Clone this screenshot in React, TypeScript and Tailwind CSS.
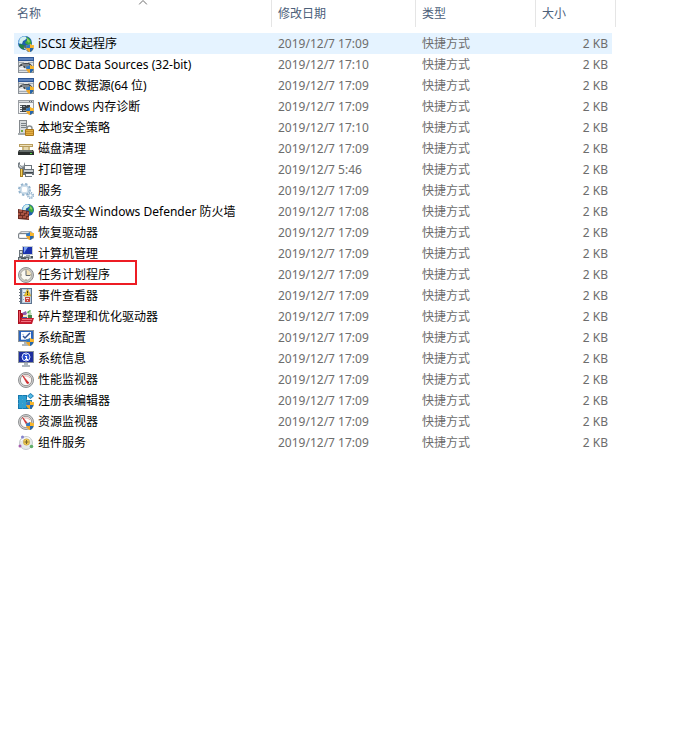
import type { ReactNode } from 'react';

// small UAC shield, anchored at its top left corner
const Shield = ({ x = 8, y = 8 }: { x?: number; y?: number }) => (
  <g transform={`translate(${x} ${y})`}>
    <path d="M4 0C5 1 6.500 1.200 8 1.200C8 5 7 7 4 8C1 7 0 5 0 1.200C1.500 1.200 3 1 4 0Z" fill="#f2c14b" />
    <path d="M4 0V4H0.300L0 1.200C1.500 1.200 3 1 4 0Z" fill="#2f77c4" />
    <path d="M4 4H7.600C7 6.200 6 7.300 4 8Z" fill="#2565ad" />
    <path d="M4 0C5 1 6.500 1.200 8 1.200L7.600 4H4Z" fill="#f7b52c" />
    <path d="M0.300 4H4V8C2 7.300 1 6.200 0.300 4Z" fill="#eda52a" />
  </g>
);

const Globe = ({ cx, cy, r }: { cx: number; cy: number; r: number }) => (
  <g transform={`translate(${cx} ${cy}) scale(${r / 7})`}>
    <circle r="7" fill="#1f5fae" />
    <path d="M-7 0A7 7 0 0 1 1 -6.900C-1 -4 -2 -2 -5 1Z" fill="#79b8e8" />
    <path d="M-5 -4C-3 -7 1 -6.500 2 -5L0 -3L-2 -2L-3 1L-6 0Z" fill="#d4f0ee" />
    <path d="M1 -6C4 -6 6 -3 6.500 0C6 3 4 4 3 2L0 0L1 -2L3 -3Z" fill="#3aa640" />
    <path d="M-5 1L-1 2L1 4L-1 6.500C-4 6 -5.500 4 -6 2Z" fill="#238345" />
    <path d="M2 -5L5 -2L4 0L2 -2Z" fill="#8bd25b" />
  </g>
);

const IscsiIcon = (
  <>
    <Globe cx={7} cy={7} r={7} />
    <path d="M5 11L8 9L12 10L14 15L10 16Z" fill="#566a70" />
    <path d="M6 12L9 14" stroke="#d3dcdd" strokeWidth="1" />
    <Shield />
  </>
);

const OdbcIcon = (
  <>
    <path fill="#2f5796" d="M0 0H16V4H0Z" />
    <path fill="#5c82bd" d="M1 1H15V3H1Z" />
    <path fill="#8b9197" d="M0 4H16V16H0Z" />
    <path fill="#dfe1e3" d="M1 4H15V15H1Z" />
    <path fill="#a3abb2" d="M1 5H6V6H1ZM10 5H15V6H10ZM1 13H9V14H1Z" />
    <path d="M1 10V9C2 7 4 6 7 6H11C13 7 14 8 15 10L12 9H10L9 11H6L5 9H3Z" fill="#454b50" />
    <path d="M4 8H11M7 10H8" stroke="#c0c5c9" />
    <path d="M2 11H6V12H2Z" fill="#f7f8f8" />
    <Shield />
  </>
);

const MemoryIcon = (
  <>
    <path fill="#9a9ea3" d="M0 1H16V15H0Z" />
    <path fill="#f5f6f7" d="M1 4H15V14H1Z" />
    <path fill="#d7dadd" d="M1 2H15V3H1Z" />
    <path fill="#5f666d" d="M11 2H12V3H11ZM13 2H14V3H13Z" />
    <path fill="#3b4146" d="M4 6H12V13H4Z" />
    <path d="M2 6.500H4M2 8.500H4M2 10.500H4M2 12.500H4" stroke="#5c6369" />
    <path d="M5 7.500H7M8 6.500H9M5 11.500H8M9 9.500H11" stroke="#8f979d" />
    <Shield />
  </>
);

const SecurityIcon = (
  <>
    <path fill="#84898d" d="M1 0H9V14H1Z" />
    <path fill="#d6dadc" d="M2 1H8V13H2Z" />
    <path fill="#7b8287" d="M3 3H8V4H3ZM3 5H8V6H3ZM3 7H8V8H3Z" />
    <path fill="#a4aaad" d="M0 13H8V15H0Z" />
    <rect x="3" y="10" width="2" height="2" fill="#6fa842" />
    <path d="M9 10V8.500C9 6.500 10 6 11.500 6S14 6.500 14 8.500V10" fill="none" stroke="#8b9194" strokeWidth="1.500" />
    <rect x="7" y="9" width="9" height="7" rx="1" fill="#a87519" />
    <rect x="8" y="10" width="7" height="5" fill="#e3b144" />
    <path d="M8 11.500H15M8 13.500H15" stroke="#c98f2d" />
  </>
);

const DiskCleanupIcon = (
  <>
    <path d="M1 3H15V6H1Z" fill="#b99d5d" />
    <path d="M2 4H14V5H2Z" fill="#ede0b8" />
    <path d="M4 6H12V9H4Z" fill="#cdb77e" />
    <path d="M6 6H10V9H6Z" fill="#e5d7ab" />
    <path d="M1 9H15L16 11V14H0V11Z" fill="#2c302f" />
    <path d="M2 9H14L15 11H1Z" fill="#666d6b" />
    <rect x="12" y="12" width="2" height="1" fill="#4edb44" />
  </>
);

const PrintIcon = (
  <>
    <path fill="#6a737a" d="M6 3H14V7H16V13H14V15H7V13H5V6H6Z" />
    <path fill="#f9fafb" d="M7 4H13V7H7ZM8 12H14V14H8Z" />
    <path fill="#c5ccd1" d="M6 8H15V10H6Z" />
    <path fill="#3d454b" d="M7 10H15V11H7Z" />
    <path d="M2 6H5V15H2Z" fill="#a57f22" />
    <path d="M3 7H4V14H3Z" fill="#f1cf5d" />
    <path d="M0 1L2 0V3L4 4L6 3V0L7 2V5L5 7H2L0 5Z" fill="#777f85" />
    <path d="M1 2V4L3 6L6 4V3L4 5L2 4Z" fill="#dfe4e7" />
  </>
);

const ServicesIcon = (
  <>
    <circle cx="6.500" cy="6.500" r="5.500" fill="none" stroke="#93b3cd" strokeWidth="2" strokeDasharray="2.300 2.020" />
    <circle cx="6.500" cy="6.500" r="4" fill="white" stroke="#a7c1d6" strokeWidth="2" />
    <circle cx="6.500" cy="6.500" r="3.800" fill="none" stroke="#d8e7f2" />
    <circle cx="12.500" cy="12.500" r="2.800" fill="none" stroke="#87a9c6" strokeWidth="1.500" strokeDasharray="1.300 0.900" />
    <circle cx="12.500" cy="12.500" r="1.700" fill="white" stroke="#a9c3d8" />
  </>
);

const FirewallIcon = (
  <>
    <Globe cx={10} cy={6} r={6} />
    <path fill="#6b2d24" d="M0 5L5 6L11 7V16L0 15Z" />
    <path fill="#a95343" d="M1 6H4V8H1ZM5 7H8V9H5ZM9 8H11V10H9ZM0 9H2V11H0ZM3 9H6V11H3ZM7 10H10V12H7ZM1 12H4V14H1ZM5 12H8V14H5ZM9 13H11V15H9Z" />
  </>
);

const RecoveryIcon = (
  <>
    <path d="M3 6H13L16 9V13H0V9Z" fill="#a8adb2" />
    <path d="M4 7H12L14 9H2Z" fill="#dfe2e5" />
    <rect x="0" y="8" width="16" height="6" rx="2" fill="#7f858b" />
    <rect x="1" y="9" width="14" height="4" rx="1" fill="#e9ebed" />
    <path d="M2 10H8V12H2Z" fill="white" />
    <Shield x={8} y={7} />
  </>
);

const ComputerIcon = (
  <>
    <path fill="#c6cdd2" d="M4 0H15V9H4Z" />
    <path fill="#1a31ae" d="M5 1H14V8H5Z" />
    <path fill="#7ba2f1" d="M6 1H10L6 7Z" />
    <path fill="#9ba4aa" d="M8 9H12V10H15V13H6V10H8Z" />
    <path fill="#6a737a" d="M1 4H5V11H1Z" />
    <path fill="#d5dadd" d="M2 5H4V7H2ZM2 8H4V10H2Z" />
    <path fill="#5d666d" d="M0 11H11V15H0Z" />
    <path fill="#b8c0c5" d="M1 12H10V14H1Z" />
    <path fill="#48545c" d="M3 12H8V13H3ZM13 10H15V12H13Z" />
  </>
);

const SchedulerIcon = (
  <>
    <circle cx="8" cy="8" r="7.500" fill="#c9c9c7" stroke="#8e8f8f" />
    <circle cx="8" cy="8" r="5.500" fill="#faf9f1" stroke="#aaa99f" />
    <path d="M8 8V3A5 5 0 0 1 13 8Z" fill="#f3e2b6" />
    <path d="M8 3V4M8 12V13M3 8H4M12 8H13" stroke="#918b78" />
    <path d="M8 4V8.500H12" fill="none" stroke="#626871" />
  </>
);

const EventIcon = (
  <>
    <path fill="#5d7490" d="M2 0H14V16H2Z" />
    <path fill="#b9cbdd" d="M4 1H13V15H4Z" />
    <path fill="#e5edf4" d="M5 2H12V14H5Z" />
    <path fill="#8aa4bf" d="M5 4H8V5H5ZM5 7H7V8H5ZM5 11H6V12H5Z" />
    <path d="M1 1.500H4M1 4.500H4M1 7.500H4M1 10.500H4M1 13.500H4" stroke="#69737e" />
    <path d="M9.500 1L13 8H6Z" fill="#efc52c" stroke="#b48e22" strokeWidth="0.500" />
    <path d="M9.500 3V5.500M9.500 6V7" stroke="#4a3c10" />
    <path d="M7 9H12V14H7Z" fill="#c9473f" />
    <path d="M8 10H11V11H8ZM9 12H10V13H9Z" fill="#f7d9d4" />
  </>
);

const DefragIcon = (
  <>
    <path d="M0 1H3V4H6V8H14V15H0Z" fill="#a30d1b" />
    <path d="M1 2H2V13H1Z" fill="#ee5c69" />
    <path d="M4 4L8 2L9 5L6 7Z" fill="#8c5fae" />
    <path d="M9 3L12 1L13 2L10 5Z" fill="#55ad50" />
    <path d="M12 2L14 5L10 8V5Z" fill="#b9d8b4" />
    <path d="M5 6H10V9H5Z" fill="#f4e8c2" />
    <path d="M10 6H14V9H10Z" fill="#45884c" />
    <path d="M3 9H16L14 15H1Z" fill="#c41c30" />
    <path d="M4 10.500H14M3 12.500H13" stroke="#ef7180" />
    <path d="M4 8H9V9H4Z" fill="#3c5cb0" />
  </>
);

const Monitor = () => (
  <>
    <path fill="#8a939b" d="M0 0H16V12H0Z" />
    <path fill="#dce0e2" d="M1 1H15V11H1Z" />
    <path fill="#aeb7be" d="M6 12H10V14H12V16H4V14H6Z" />
  </>
);

const ConfigIcon = (
  <>
    <Monitor />
    <path fill="#2b65bd" d="M1 1H15V11H1Z" />
    <path fill="#f8fbff" d="M3 2H13V10H3Z" />
    <path fill="#b9cdec" d="M4 4H6V5H4ZM3 9H9V10H3Z" />
    <path d="M5 6L7 8L12 3" fill="none" stroke="#2b4f94" strokeWidth="1.500" />
    <Shield />
  </>
);

const InfoIcon = (
  <>
    <Monitor />
    <path fill="#1f2f9e" d="M1 1H15V11H1Z" />
    <circle cx="8" cy="6" r="4" fill="#2a4fd0" stroke="#dfe6ff" />
    <path d="M8 3V4M7 5.500H8.500V8M7 8.500H10" fill="none" stroke="white" strokeWidth="1.200" />
  </>
);

const Gauge = () => (
  <>
    <circle cx="8" cy="8" r="7.500" fill="#d2d3d4" stroke="#8f9192" />
    <circle cx="8" cy="8" r="5.700" fill="#fcfafa" stroke="#9b9693" />
    <path d="M5 5C7 3.500 10 3.500 12 6" fill="none" stroke="#e0aaa5" />
    <path d="M4.500 3.500L11 11L9 11.500Z" fill="#d6292a" stroke="#c9272a" strokeWidth="0.700" />
  </>
);

const RegistryIcon = (
  <>
    <path fill="#1678ad" d="M0 2H9V7H14V16H0Z" />
    <path fill="#2d9fd3" d="M1 3H4V6H1ZM5 3H8V6H5ZM1 7H4V10H1ZM5 7H8V10H5ZM9 8H13V10H9ZM1 11H4V15H1ZM5 11H8V15H5Z" />
    <path d="M0 6.500H9M4.500 2V16M0 10.500H13" stroke="#59bfe4" strokeWidth="0.500" />
    <path d="M12.500 0L16 3L12.500 6L9 3Z" fill="#1b79b3" />
    <path d="M12.500 1L15 3L12.500 5L10 3Z" fill="#58bde6" />
    <Shield />
  </>
);

const ComponentIcon = (
  <>
    <circle cx="8" cy="8" r="6.500" fill="#e6e9eb" stroke="#c4c9cd" />
    <path d="M3 6C5 3 10 2 12 4" fill="none" stroke="white" />
    <circle cx="8.500" cy="7" r="3.200" fill="#efcb54" stroke="#b99437" strokeWidth="0.500" />
    <path d="M8.500 5V9M6.500 7H10.500" stroke="#7b6428" />
    <circle cx="4.500" cy="2" r="1.500" fill="#8581cc" />
    <circle cx="2" cy="11" r="1.500" fill="#a65dae" />
    <circle cx="13.500" cy="11.500" r="1.800" fill="#5fae6a" />
  </>
);

type Shortcut = { name: string; icon: ReactNode; time?: string; selected?: boolean; marked?: boolean };

const shortcuts: Shortcut[] = [
  { name: 'iSCSI 发起程序', icon: IscsiIcon, selected: true },
  { name: 'ODBC Data Sources (32-bit)', icon: OdbcIcon, time: '17:10' },
  { name: 'ODBC 数据源(64 位)', icon: OdbcIcon },
  { name: 'Windows 内存诊断', icon: MemoryIcon },
  { name: '本地安全策略', icon: SecurityIcon, time: '17:10' },
  { name: '磁盘清理', icon: DiskCleanupIcon },
  { name: '打印管理', icon: PrintIcon, time: '5:46' },
  { name: '服务', icon: ServicesIcon },
  { name: '高级安全 Windows Defender 防火墙', icon: FirewallIcon, time: '17:08' },
  { name: '恢复驱动器', icon: RecoveryIcon },
  { name: '计算机管理', icon: ComputerIcon },
  { name: '任务计划程序', icon: SchedulerIcon, marked: true },
  { name: '事件查看器', icon: EventIcon },
  { name: '碎片整理和优化驱动器', icon: DefragIcon },
  { name: '系统配置', icon: ConfigIcon },
  { name: '系统信息', icon: InfoIcon },
  { name: '性能监视器', icon: <Gauge /> },
  { name: '注册表编辑器', icon: RegistryIcon },
  { name: '资源监视器', icon: <><Gauge /><Shield /></> },
  { name: '组件服务', icon: ComponentIcon },
];

const columns = [
  { title: '名称', width: 'w-auto', pad: 'pl-[3px]' },
  { title: '修改日期', width: 'w-36', pad: 'pl-1.5' },
  { title: '类型', width: 'w-30', pad: 'pl-1.5' },
  { title: '大小', width: 'w-20', pad: 'pl-1.5' },
];

export default function App() {
  return (
    <main className="min-h-screen bg-white pl-3.5 pr-[58px] font-['Noto_Sans','Noto_Sans_CJK_SC',sans-serif] text-xs">
      <table className="w-full table-fixed border-separate border-spacing-0 text-left">
        <thead>
          <tr>
            {columns.map((column, i) => (
              <th key={column.title} className={`${column.width} relative p-0 pb-1.5 font-normal`}>
                <button
                  type="button"
                  className={`${column.pad} block h-[27px] w-full border-r border-[#e5e5e5] text-left text-[#4c607a]`}
                >
                  {column.title}
                </button>
                {i === 0 && (
                  <svg className="absolute top-0 left-1/2 h-[5px] w-[9px] -translate-x-1/2" viewBox="0 0 9 5" aria-hidden="true">
                    <path d="M0.500 4.500L4.500 0.500L8.500 4.500" fill="none" stroke="#6d6d6d" />
                  </svg>
                )}
              </th>
            ))}
          </tr>
        </thead>
        <tbody>
          {shortcuts.map((item) => {
            const bg = item.selected ? 'bg-[#e5f3ff]' : '';
            return (
              <tr key={item.name} className="h-[21px] leading-5 text-[#6d6d6d]">
                <td className={`${bg} relative p-0 pl-1`}>
                  <div className="flex items-center gap-1 whitespace-nowrap text-black">
                    <svg className="size-4 shrink-0" viewBox="0 0 16 16" aria-hidden="true">
                      {item.icon}
                    </svg>
                    {item.name}
                  </div>
                  {item.marked && (
                    <span className="absolute -top-1 left-0 h-[25px] w-[123px] border-2 border-[#ed1c24]" />
                  )}
                </td>
                <td className={`${bg} p-0 pl-1.5`}>2019/12/7 {item.time ?? '17:09'}</td>
                <td className={`${bg} p-0 pl-1.5`}>快捷方式</td>
                <td className={`${bg} border-r-4 border-transparent bg-clip-padding p-0 pr-1 text-right`}>2 KB</td>
              </tr>
            );
          })}
        </tbody>
      </table>
    </main>
  );
}
